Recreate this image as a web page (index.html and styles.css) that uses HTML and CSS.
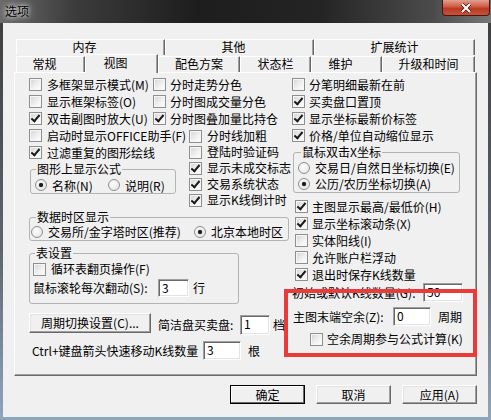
FILE: index.html
```html
<!DOCTYPE html>
<html lang="zh-CN">

<head>
    <meta charset="UTF-8">
    <title>选项</title>
    <link rel="stylesheet" href="styles.css">
</head>

<body>
    <div class="window">
        <div class="titlebar">
            <span class="title">选项</span>
            <span class="close">
                <svg width="12" height="10" viewBox="0 0 12 10">
                    <path d="M2 1 L10 9 M10 1 L2 9" stroke="#5a1a10" stroke-width="3.6" />
                    <path d="M2 1 L10 9 M10 1 L2 9" stroke="#fff" stroke-width="2" />
                </svg>
            </span>
        </div>

        <div class="client">
            <div class="tabs">
                <div class="tab-row upper">
                    <div class="tab t-mem shift">内存</div>
                    <div class="tab t-other shift">其他</div>
                    <div class="tab t-ext">扩展统计</div>
                </div>
                <div class="tab-row lower">
                    <div class="tab t-gen shift">常规</div>
                    <div class="tab t-view shift sel">视图</div>
                    <div class="tab t-color">配色方案</div>
                    <div class="tab t-status">状态栏</div>
                    <div class="tab t-maint shift">维护</div>
                    <div class="tab t-up">升级和时间</div>
                </div>
            </div>

            <div class="page">
                <!-- left and middle columns -->
                <div class="left-block">
                    <div class="top-part">
                        <div class="col-a">
                            <div class="chk"><span class="box"></span>多框架显示模式(M)</div>
                            <div class="chk"><span class="box"></span>显示框架标签(O)</div>
                            <div class="chk"><span class="box on"></span>双击副图时放大(U)</div>
                            <div class="chk"><span class="box"></span>启动时显示OFFICE助手(F)</div>
                            <div class="chk"><span class="box on"></span>过滤重复的图形绘线</div>
                            <fieldset class="grp g-formula">
                                <legend>图形上显示公式</legend>
                                <div class="radios">
                                    <span class="opt first"><span class="rad on"></span>名称(N)</span>
                                    <span class="opt"><span class="rad"></span>说明(R)</span>
                                </div>
                            </fieldset>
                        </div>
                        <div class="col-b">
                            <div class="chk"><span class="box"></span>分时走势分色</div>
                            <div class="chk"><span class="box"></span>分时图成交量分色</div>
                            <div class="chk"><span class="box on"></span>分时图叠加量比持仓</div>
                            <div class="sub">
                                <div class="chk"><span class="box"></span>分时线加粗</div>
                                <div class="chk"><span class="box"></span>登陆时验证码</div>
                                <div class="chk"><span class="box on"></span>显示未成交标志</div>
                                <div class="chk"><span class="box on"></span>交易系统状态</div>
                                <div class="chk"><span class="box on"></span>显示K线倒计时</div>
                            </div>
                        </div>
                    </div>

                    <fieldset class="grp g-zone">
                        <legend>数据时区显示</legend>
                        <div class="radios">
                            <span class="opt first"><span class="rad"></span>交易所/金字塔时区(推荐)</span>
                            <span class="opt"><span class="rad on"></span>北京本地时区</span>
                        </div>
                    </fieldset>

                    <fieldset class="grp g-table">
                        <legend>表设置</legend>
                        <div class="grp-body">
                            <div class="chk"><span class="box"></span>循环表翻页操作(F)</div>
                            <div class="field">
                                <span class="lbl lbl-scroll">鼠标滚轮每次翻动(S):</span>
                                <span class="edit e-scroll">3</span>
                                <span class="unit">行</span>
                            </div>
                        </div>
                    </fieldset>

                    <div class="btn-row">
                        <span class="btn b-cycle">周期切换设置(C)...</span>
                        <span class="lbl lbl-brief">简洁盘买卖盘:</span>
                        <span class="edit e-brief">1</span>
                        <span class="unit">档</span>
                    </div>

                    <div class="field ctrl-row">
                        <span class="lbl lbl-ctrl">Ctrl+键盘箭头快速移动K线数量</span>
                        <span class="edit e-ctrl">3</span>
                        <span class="unit">根</span>
                    </div>
                </div>

                <!-- right column -->
                <div class="col-c">
                    <div class="chk"><span class="box"></span>分笔明细最新在前</div>
                    <div class="chk"><span class="box on"></span>买卖盘口置顶</div>
                    <div class="chk"><span class="box on"></span>显示坐标最新价标签</div>
                    <div class="chk"><span class="box on"></span>价格/单位自动缩位显示</div>

                    <fieldset class="grp g-mouse">
                        <legend>鼠标双击X坐标</legend>
                        <div class="radios">
                            <span class="opt"><span class="rad"></span>交易日/自然日坐标切换(E)</span>
                            <span class="opt"><span class="rad on"></span>公历/农历坐标切换(A)</span>
                        </div>
                    </fieldset>

                    <div class="more">
                        <div class="chk"><span class="box on"></span>主图显示最高/最低价(H)</div>
                        <div class="chk"><span class="box on"></span>显示坐标滚动条(X)</div>
                        <div class="chk"><span class="box"></span>实体阳线(I)</div>
                        <div class="chk"><span class="box"></span>允许账户栏浮动</div>
                        <div class="chk"><span class="box on"></span>退出时保存K线数量</div>
                    </div>

                    <div class="field f-init">
                        <span class="lbl lbl-init">初始或默认K线数量(G):</span>
                        <span class="edit e-init">50</span>
                    </div>
                    <div class="field f-tail">
                        <span class="lbl lbl-tail">主图末端空余(Z):</span>
                        <span class="edit e-tail">0</span>
                        <span class="unit">周期</span>
                    </div>
                    <div class="chk c-spare"><span class="box"></span>空余周期参与公式计算(K)</div>
                </div>
            </div>

            <div class="actions">
                <span class="btn def">确定</span>
                <span class="btn">取消</span>
                <span class="btn">应用(A)</span>
            </div>
        </div>

        <!-- red highlight drawn over the dialog -->
        <div class="mark"></div>
    </div>
</body>

</html>
```

FILE: styles.css
```css
/* Reset */
* {
    box-sizing: border-box;
}

body {
    margin: 0;
    width: 491px;
    height: 420px;
    overflow: hidden;
    font-family: "Noto Sans CJK SC", "Liberation Sans", sans-serif;
    font-size: 12px;
    line-height: 16px;
    color: #000;
}

/* Window frame */
.window {
    position: relative;
    width: 491px;
    height: 420px;
    display: flex;
    flex-direction: column;
    background: linear-gradient(#3b3b3b, #5d6670 60%, #8fa6bf);
}

.titlebar {
    flex: none;
    height: 23px;
    display: flex;
    align-items: flex-start;
    background: linear-gradient(to right, #6a6a6a, #3c3c3c 15%, #1d1d1d 40%, #242424 65%, #4b4b4b 88%, #777);
}

.title {
    margin: 4px 0 0 5px;
    line-height: 14px;
    text-shadow: 0 0 4px #fff, 0 0 8px #ddd;
}

.close {
    margin-left: auto;
    margin-right: 1px;
    width: 48px;
    height: 16px;
    display: flex;
    align-items: center;
    justify-content: center;
    border: 1px solid #4a1510;
    border-top: none;
    border-radius: 0 0 4px 4px;
    background: linear-gradient(#e0a08f, #cf5a44 45%, #b83a22 55%, #c7513a);
}

.client {
    flex: 1;
    margin: 0 3px 3px;
    padding: 16px 11px 0;
    background: #f0f0f0;
    display: flex;
    flex-direction: column;
}

/* Tabs */
.tabs {
    margin: 0 2px;
}

.tab-row {
    display: flex;
}

.tab-row.upper {
    height: 16px;
}

.tab-row.lower {
    height: 17px;
    align-items: flex-end;
}

.tab {
    flex: none;
    height: 16px;
    border-top: 1px solid #fff;
    border-left: 1px solid #fff;
    border-right: 1px solid #696969;
    box-shadow: inset -1px 0 #a0a0a0;
    line-height: 14px;
    text-align: center;
    white-space: nowrap;
    background: #f0f0f0;
}

.tab.shift {
    padding-right: 12px;
}

.tab.sel {
    position: relative;
    z-index: 1;
    height: 19px;
    margin-bottom: -1px;
    line-height: 15px;
}

.t-mem,
.t-other {
    width: 149px;
}

.t-ext {
    width: 161px;
}

.t-gen {
    width: 69px;
}

.t-view {
    width: 73px;
}

.t-color {
    width: 82px;
}

.t-status,
.t-maint {
    width: 71px;
}

.t-up {
    width: 93px;
}

/* Tab page */
.page {
    height: 304px;
    display: flex;
    padding: 3px 0 0 14px;
    border: 1px solid;
    border-color: #fff #696969 #696969 #fff;
    box-shadow: inset -1px -1px #a0a0a0;
}

.left-block {
    flex: none;
    width: 263px;
}

.top-part {
    display: flex;
}

.col-a {
    flex: none;
    width: 124px;
}

.col-b {
    flex: none;
    width: 139px;
}

.col-b .chk {
    gap: 4px;
}

.sub {
    margin-top: 1px;
    padding-left: 36px;
}

.sub .chk {
    height: 16px;
    gap: 5px;
}

.col-c {
    flex: none;
    width: 172px;
}

/* Check boxes and radio buttons */
.chk {
    display: flex;
    align-items: center;
    gap: 5px;
    height: 17px;
    line-height: 16px;
    white-space: nowrap;
}

.col-c .chk {
    gap: 4px;
}

.box {
    position: relative;
    flex: none;
    width: 13px;
    height: 13px;
    border: 1px solid #8e8f8f;
    background: linear-gradient(135deg, #d4d4d4, #f2f2f2 60%, #fff);
    box-shadow: inset 0 0 0 1px #f6f6f6;
}

.box.on::after {
    content: "";
    position: absolute;
    left: 3px;
    top: 0;
    width: 3px;
    height: 7px;
    border: solid #1a1a1a;
    border-width: 0 2px 2px 0;
    transform: rotate(40deg);
}

.radios {
    display: flex;
    align-items: center;
    height: 16px;
    white-space: nowrap;
}

.opt {
    display: flex;
    align-items: center;
    gap: 5px;
    line-height: 15px;
}

.rad {
    position: relative;
    flex: none;
    width: 12px;
    height: 12px;
    border: 1px solid #8e8f8f;
    border-radius: 50%;
    background: radial-gradient(circle at 40% 40%, #fff, #dedede);
}

.rad.on::after {
    content: "";
    position: absolute;
    left: 3px;
    top: 3px;
    width: 4px;
    height: 4px;
    border-radius: 50%;
    background: #1a1a1a;
    box-shadow: 0 0 1px #333;
}

/* Group boxes */
.grp {
    margin: 0;
    padding: 0;
    min-width: 0;
    border: 1px solid #b4b4b4;
    border-radius: 3px;
}

.grp legend {
    margin-left: 5px;
    padding: 0 1px;
    line-height: 14px;
}

.g-formula {
    width: 146px;
    margin: 1px 0 0 1px;
}

.g-formula .radios {
    margin-top: 1px;
    padding-left: 4px;
}

.g-formula .first {
    width: 73px;
}

.g-zone {
    width: 260px;
    margin-top: 2px;
}

.g-zone legend {
    margin-left: 6px;
}

.g-zone .radios {
    padding: 0 0 1px 1px;
}

.g-zone .first {
    width: 163px;
}

.g-table {
    width: 210px;
    margin-top: 5px;
}

.grp-body {
    padding: 1px 0 6px 3px;
}

.grp-body .chk {
    height: 16px;
}

.grp-body .field {
    margin-top: 2px;
    height: 18px;
}

.g-mouse {
    width: 167px;
    margin: 1px 0 0 1px;
}

.g-mouse legend {
    margin-left: 7px;
}

.g-mouse .radios {
    flex-direction: column;
    align-items: flex-start;
    height: auto;
    padding: 1px 0 0 4px;
}

.g-mouse .opt {
    height: 16px;
    line-height: 16px;
}

.more {
    margin-top: 5px;
    padding-left: 3px;
}

/* Fields with edit boxes */
.field {
    display: flex;
    align-items: center;
    white-space: nowrap;
}

.lbl {
    flex: none;
}

.unit {
    margin-left: 4px;
}

.edit {
    flex: none;
    height: 19px;
    padding-left: 3px;
    line-height: 16px;
    background: #fff;
    border: 1px solid;
    border-color: #a0a0a0 #fff #fff #a0a0a0;
    box-shadow: inset 1px 1px #696969, inset -1px -1px #e3e3e3;
}

.lbl-scroll {
    width: 125px;
}

.e-scroll {
    width: 31px;
    height: 18px;
}

.btn-row {
    display: flex;
    align-items: flex-start;
    margin-top: 9px;
    height: 22px;
    white-space: nowrap;
}

.b-cycle {
    width: 122px;
    height: 20px;
}

.lbl-brief {
    width: 82px;
    margin: 2px 0 0 7px;
    line-height: 20px;
}

.e-brief {
    width: 30px;
    height: 20px;
    margin-top: 2px;
}

.btn-row .unit {
    margin: 2px 0 0 3px;
    line-height: 20px;
}

.ctrl-row {
    margin-top: 6px;
    height: 19px;
}

.lbl-ctrl {
    width: 171px;
    margin-left: 3px;
}

.e-ctrl {
    width: 38px;
}

.ctrl-row .unit {
    margin-left: 7px;
}

.f-init {
    height: 19px;
}

.lbl-init {
    width: 131px;
}

.e-init {
    width: 40px;
}

.f-tail {
    margin-top: 5px;
    height: 19px;
}

.lbl-tail {
    width: 100px;
    margin-left: 1px;
}

.e-tail {
    width: 38px;
}

.f-tail .unit {
    margin-left: 7px;
}

.c-spare {
    margin-top: 5px;
    height: 16px;
    padding-left: 18px;
}

/* Buttons */
.btn {
    display: flex;
    align-items: center;
    justify-content: center;
    white-space: nowrap;
    background: #f0f0f0;
    border: 1px solid;
    border-color: #fff #696969 #696969 #fff;
    box-shadow: inset -1px -1px #a0a0a0, inset 1px 1px #e3e3e3;
}

.actions {
    display: flex;
    justify-content: flex-end;
    gap: 11px;
    margin-top: 9px;
}

.actions .btn {
    width: 75px;
    height: 19px;
}

.btn.def {
    border-color: #000;
    box-shadow: inset -1px -1px #696969, inset 1px 1px #fff;
}

/* Red highlight annotation */
.mark {
    position: absolute;
    left: 284px;
    top: 289px;
    width: 193px;
    height: 68px;
    border: 4px solid #ea3a3a;
}
```
